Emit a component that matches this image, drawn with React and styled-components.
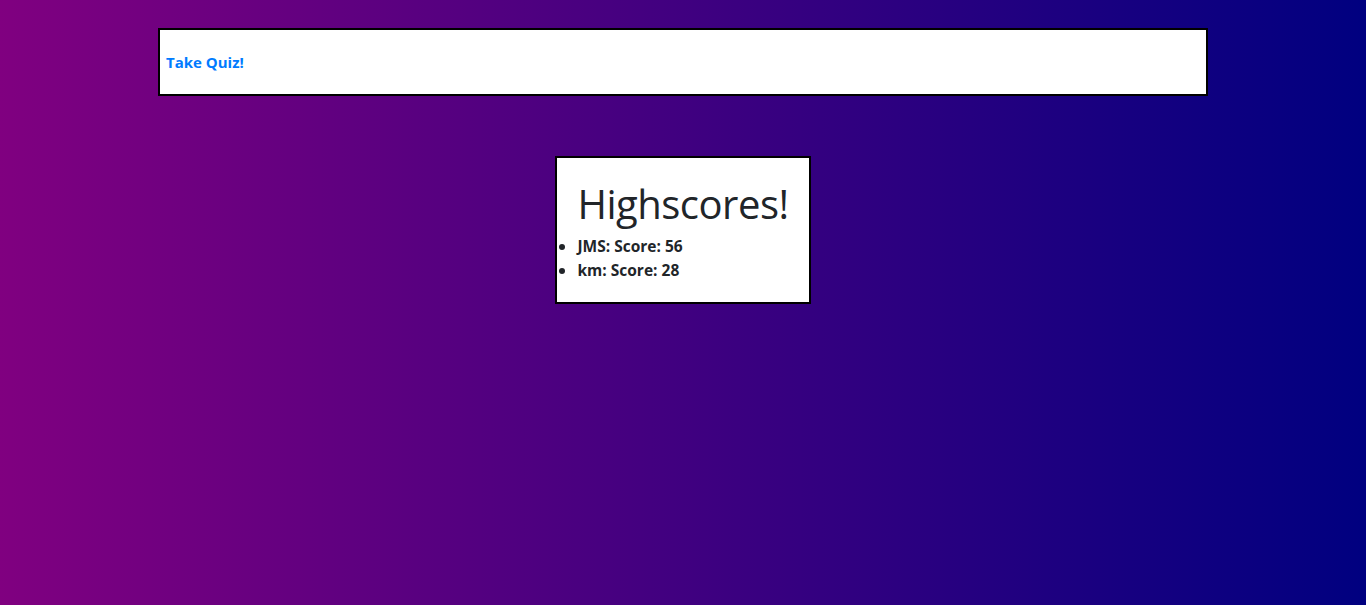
import styled, { createGlobalStyle } from "styled-components";

const scores = [
  { name: "JMS", score: 56 },
  { name: "km", score: 28 },
];

const GlobalStyle = createGlobalStyle`
  * { box-sizing: border-box; }
  html, body { margin: 0; padding: 0; }
  body {
    font-family: "Open Sans", "Liberation Sans", sans-serif;
    font-size: 16px; line-height: 1.5; color: #212529;
  }
`;

export default function App() {
  return (
    <>
      <GlobalStyle />
      <Page>
        <Nav>
          <NavLink href="#">Take Quiz!</NavLink>
        </Nav>
        <Card>
          <Title>Highscores!</Title>
          <ScoreList>
            {scores.map(({ name, score }) => (
              <ScoreItem key={name}>{name}: Score: {score}</ScoreItem>
            ))}
          </ScoreList>
        </Card>
      </Page>
    </>
  );
}

const Page = styled.div`
  min-height: 100vh; padding-top: 28px;
  background: linear-gradient(to right, #800080, #000080);
  display: flex; flex-direction: column; align-items: center;
`;

const Nav = styled.nav`
  width: 1050px; height: 68px; background: #fff; border: 2px solid #000;
  display: flex; align-items: center; padding: 0 6px;
`;

const NavLink = styled.a`
  color: #007bff; font-weight: 700; text-decoration: none; font-size: 15px;
`;

const Card = styled.div`
  margin-top: 60px; background: #fff; border: 2px solid #000; padding: 20px;
`;

const Title = styled.h1`
  margin: 2px 0 6px; font-size: 40px; font-weight: 400; line-height: 1.2;
  letter-spacing: -0.5px; text-align: center;
`;

const ScoreList = styled.ul`margin: 0; padding: 0;`;
const ScoreItem = styled.li`font-weight: 700; font-size: 15.5px; line-height: 24px;`;
